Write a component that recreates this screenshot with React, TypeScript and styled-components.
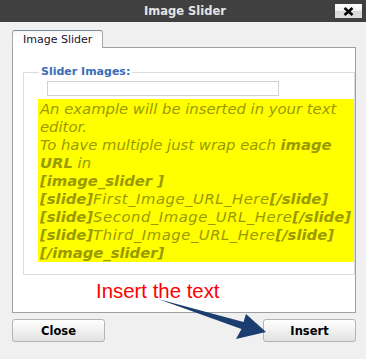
import styled, { createGlobalStyle } from 'styled-components';

const GlobalStyle = createGlobalStyle`
  html, body {
    margin: 0;
    padding: 0;
    background: #f0f0f0;
  }
  body {
    width: 366px;
    height: 359px;
    overflow: hidden;
    font-family: 'DejaVu Sans', Verdana, sans-serif;
  }
`;

type Part = { text: string; bold?: boolean; wide?: boolean };

const hintLines: Part[][] = [
  [{ text: 'An example will be inserted in your text' }],
  [{ text: 'editor.' }],
  [{ text: 'To have multiple just wrap each ' }, { text: 'image', bold: true }],
  [{ text: 'URL', bold: true }, { text: ' in' }],
  [{ text: '[image_slider ]', bold: true }],
  [{ text: '[slide]', bold: true }, { text: 'First_Image_URL_Here', wide: true }, { text: '[/slide]', bold: true }],
  [{ text: '[slide]', bold: true }, { text: 'Second_Image_URL_Here', wide: true }, { text: '[/slide]', bold: true }],
  [{ text: '[slide]', bold: true }, { text: 'Third_Image_URL_Here', wide: true }, { text: '[/slide]', bold: true }],
  [{ text: '[/image_slider]', bold: true }],
];

export default function App() {
  return (
    <Dialog>
      <GlobalStyle />
      <TitleBar>
        <span />
        <Title>Image Slider</Title>
        <CloseX aria-label="close">
          <svg width="11" height="9" viewBox="0 0 11 9">
            <path d="M1.5 1 L9.5 8 M9.5 1 L1.5 8" stroke="#000" strokeWidth="2.6" />
          </svg>
        </CloseX>
      </TitleBar>
      <Body>
        <Tabs>
          <Tab>Image Slider</Tab>
        </Tabs>
        <Panel>
          <Fieldset>
            <Legend>Slider Images:</Legend>
            <UrlInput type="text" />
            <Hint>
              {hintLines.map((line, i) => (
                <HintLine key={i}>
                  {line.map((part, j) => (
                    <HintPart key={j} $bold={part.bold} $wide={part.wide}>
                      {part.text}
                    </HintPart>
                  ))}
                </HintLine>
              ))}
            </Hint>
          </Fieldset>
        </Panel>
        <Actions>
          <Button>Close</Button>
          <Button>Insert</Button>
        </Actions>
      </Body>
      <Note>Insert the text</Note>
      <Arrow width="125" height="50" viewBox="150 295 125 50">
        <path d="M158 299 L243.5 322 L246 314 L266 332 L236 339 L241.5 329 Z" fill="#1c3d6f" />
      </Arrow>
    </Dialog>
  );
}

const Dialog = styled.div`
  position: relative;
  width: 366px;
  height: 359px;
  background: #f0f0f0;
`;

const TitleBar = styled.div`
  height: 22px;
  background: #404040;
  display: grid;
  grid-template-columns: 1fr auto 1fr;
  align-items: center;
`;

const Title = styled.div`
  color: #e4e4e4;
  font-size: 11.5px;
  font-weight: bold;
  padding-left: 4px;
`;

const CloseX = styled.div`
  justify-self: end;
  margin-right: 4px;
  width: 27px;
  height: 14px;
  box-sizing: border-box;
  background: linear-gradient(#fdfdfd 0%, #f2f2f2 50%, #d8d8d8 52%, #dedede 100%);
  display: flex;
  align-items: center;
  justify-content: center;
`;

const Body = styled.div`
  padding: 8px 10px 0 12px;
`;

const Tabs = styled.div`
  display: flex;
  position: relative;
  z-index: 1;
  margin-bottom: -1px;
`;

const Tab = styled.div`
  width: 91px;
  height: 18px;
  box-sizing: border-box;
  border: 1px solid #a4a8ac;
  border-top-color: #7e8a96;
  border-bottom: none;
  border-radius: 3px 3px 0 0;
  background: linear-gradient(#f6f6f6, #ffffff 40%);
  color: #22102e;
  font-size: 11px;
  line-height: 17px;
  padding-left: 10px;
`;

const Panel = styled.div`
  height: 266px;
  box-sizing: border-box;
  border: 1px solid #9aa0a4;
  background: #fff;
  display: flex;
  flex-direction: column;
`;

const Fieldset = styled.fieldset`
  margin: 17px 0 0 10px;
  padding: 0 0 12px 14px;
  border: 1px solid #dcdcdc;
  min-width: 0;
`;

const Legend = styled.legend`
  margin-left: 1px;
  padding: 0 2px;
  color: #3a6db5;
  font-size: 11px;
  font-weight: bold;
  line-height: 14px;
`;

const UrlInput = styled.input`
  display: block;
  box-sizing: border-box;
  width: 232px;
  height: 15px;
  margin: 2px 0 0 9px;
  padding: 0;
  border: 1px solid #d0d0d0;
  background: #fff;
`;

const Hint = styled.div`
  margin-top: 3px;
  height: 163px;
  box-sizing: border-box;
  padding: 1px 0 0 2px;
  background: #ffff00;
  color: #9a9a00;
  font-size: 14.8px;
  font-style: italic;
  line-height: 18px;
`;

const HintLine = styled.div`
  white-space: nowrap;
`;

const HintPart = styled.span<{ $bold?: boolean; $wide?: boolean }>`
  font-weight: ${(p) => (p.$bold ? 'bold' : 'normal')};
  letter-spacing: ${(p) => (p.$wide ? '0.55px' : '0')};
`;

const Actions = styled.div`
  margin-top: 6px;
  display: flex;
  justify-content: space-between;
`;

const Button = styled.button`
  width: 93px;
  height: 23px;
  padding: 0;
  border: 1px solid #b4b4b4;
  border-radius: 3px;
  background: linear-gradient(#ffffff, #e2e2e2);
  color: #000;
  font-family: 'DejaVu Sans', Verdana, sans-serif;
  font-size: 11.5px;
  font-weight: bold;
`;

const Note = styled.div`
  position: absolute;
  left: 96px;
  top: 281px;
  color: #ff0000;
  font-family: 'Liberation Sans', Arial, sans-serif;
  font-size: 20.4px;
  line-height: 20px;
`;

const Arrow = styled.svg`
  position: absolute;
  left: 150px;
  top: 295px;
`;
